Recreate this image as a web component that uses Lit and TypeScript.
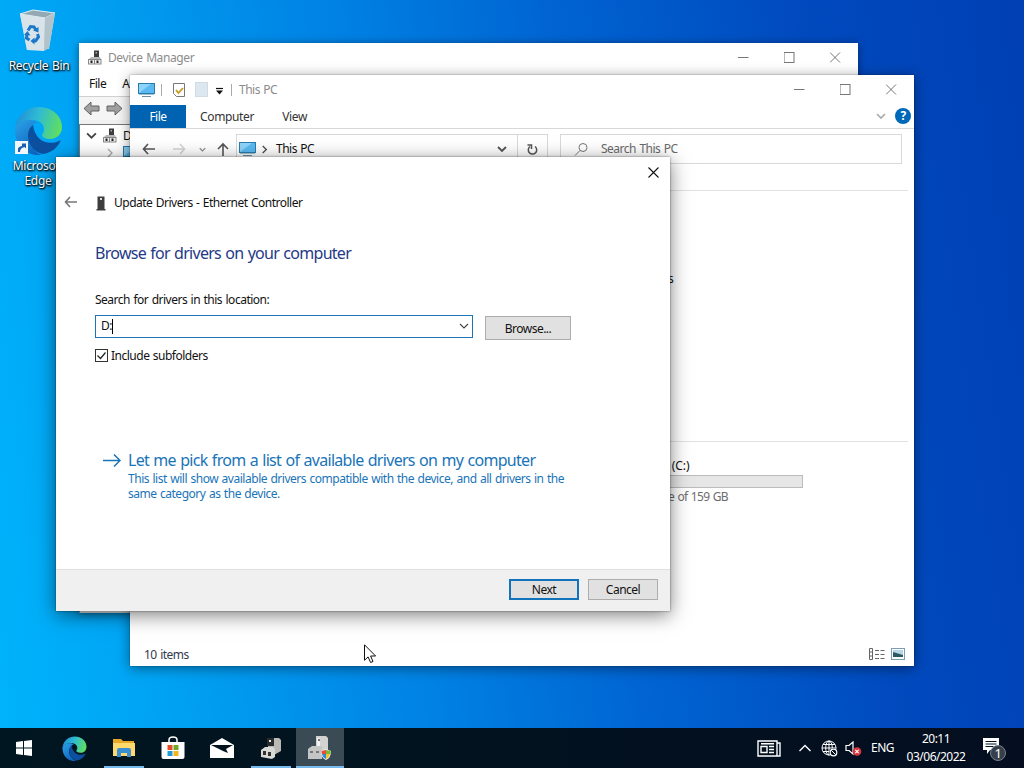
import { LitElement, html, css, svg } from "lit";
import { customElement, property } from "lit/decorators.js";

const monitorIcon = html`<svg width="18" height="16" viewBox="0 0 18 16">
  <rect x="0.500" y="1.500" width="16" height="10" fill="#5ab9f2" stroke="#2a7cab" />
  <path d="M1 11V2h12z" fill="#8ed4fa" />
  <path d="M4 14.500h9" stroke="#6d8fa5" />
  <path d="M1 12.500h15" stroke="#9fc0d2" />
</svg>`;

const deviceIcon = html`<svg width="16" height="16" viewBox="0 0 16 16">
  <rect x="7" y="0.500" width="5" height="8" fill="#3c3c3c" />
  <rect x="8.500" y="2" width="1.500" height="1.500" fill="#aaa" />
  <path d="M2 9l2-2h9l1 2v5H2z" fill="#b9b9b9" />
  <rect x="1.500" y="9.500" width="12.500" height="4.500" fill="#eee" stroke="#8a8a8a" />
  <rect x="3.500" y="10.500" width="2" height="2.500" fill="#222" />
  <rect x="9.500" y="10.500" width="2" height="2.500" fill="#222" />
  <path d="M7.500 9v5" stroke="#888" />
</svg>`;

const chevron = (color: string, size = 10, width = 1.3) => html`<svg
  width=${size}
  height=${size}
  viewBox="0 0 10 10"
>
  <path d="M1 3l4 4 4-4" fill="none" stroke=${color} stroke-width=${width} />
</svg>`;

const edgeShape = svg`
  <defs>
    <linearGradient id="edge-top" x1="0" y1="0.4" x2="1" y2="0.6">
      <stop offset="0" stop-color="#1f8fd8" />
      <stop offset="0.45" stop-color="#2fbbd4" />
      <stop offset="1" stop-color="#62e05a" />
    </linearGradient>
    <linearGradient id="edge-left" x1="0" y1="0" x2="0.6" y2="1">
      <stop offset="0" stop-color="#2ba3e8" />
      <stop offset="1" stop-color="#0f62bd" />
    </linearGradient>
  </defs>
  <path d="M1 22C3 8 14 1 25 1c13 0 23 9 23 20 0 7-5 12-12 12-5 0-8-2-8-4 0-1 2-2 2-6 0-5-5-9-11-9C10 14 3 17 1 22z" fill="url(#edge-top)" />
  <path d="M1 22c2-5 8-8 14-8 3 0 6 1 8 2-5 2-9 8-9 14 0 8 6 16 14 19-14 2-28-9-27-27z" fill="url(#edge-left)" />
  <path d="M19 19c-4 3-5 7-5 11 0 9 7 17 15 18 8-1 14-6 17-12 1-1 0-2-1-1-11 5-24 0-26-16z" fill="#0d4f9f" />`;

const edgeIcon = (size: number) =>
  html`<svg width=${size} height=${size} viewBox="0 0 49 49">${edgeShape}</svg>`;

const recycleIcon = html`<svg width="40" height="44" viewBox="0 0 40 44">
  <path d="M1 5l35-1-6 36-22 1z" fill="#c3d5df" />
  <path d="M1 5l13-4 22 3-10 5z" fill="#93a9b4" stroke="#e2eff5" />
  <path d="M1 5l25 4-1 33-17-1z" fill="#d8e4ea" />
  <path d="M26 9l10-5-6 35-5 3z" fill="#b2c3cb" />
  <g fill="none" stroke="#1a78c8" stroke-width="3">
    <path d="M9 21.500l2.500-4 3.500 0.500 2 3" />
    <path d="M18.500 25l1 3-3 4h-2" />
    <path d="M10.500 31l-3-2 0.500-4" />
  </g>
  <path d="M19.500 18v5.500l-5.500-2zM15.500 28.500v7l-4-3.500zM5 26l3.500-4 3 4.500z" fill="#1a78c8" />
</svg>`;

const toolbarArrow = html`<svg width="17" height="15" viewBox="0 0 17 15">
  <path d="M1 7.500L8 1v4h8v5H8v4z" fill="#a0a0a0" stroke="#626262" />
</svg>`;

const navArrow = (color: string) => html`<svg width="14" height="12" viewBox="0 0 14 12">
  <path d="M6 1L1.500 6 6 11M1.500 6H13" fill="none" stroke=${color} stroke-width="1.600" />
</svg>`;

@customElement("window-controls")
export class WindowControls extends LitElement {
  static styles = css`
    :host {
      display: flex;
      margin-left: auto;
    }
    svg {
      display: block;
      width: 11px;
      height: 11px;
      padding: 0 17.5px 1px;
      fill: none;
      stroke: #777;
    }
  `;

  render() {
    return html`
      <svg viewBox="0 0 11 11"><path d="M0.500 5.500h10.500" /></svg>
      <svg viewBox="0 0 11 11"><rect x="0.500" y="0.500" width="10" height="10" /></svg>
      <svg viewBox="0 0 11 11"><path d="M0.500 0.500l10 10M10.500 0.500l-10 10" /></svg>
    `;
  }
}

@customElement("desktop-icon")
export class DesktopIcon extends LitElement {
  @property() label = "";

  static styles = css`
    :host {
      display: flex;
      flex-direction: column;
      align-items: center;
      width: 76px;
    }
    .label {
      font-size: 12px;
      line-height: 15px;
      letter-spacing: -0.3px;
      color: #fff;
      text-align: center;
      text-shadow: 0 1px 2px #000, 1px 1px 2px #000;
    }
  `;

  render() {
    return html`<slot></slot><span class="label">${this.label}</span>`;
  }
}

@customElement("device-manager")
export class DeviceManager extends LitElement {
  static styles = css`
    :host {
      display: flex;
      flex-direction: column;
      background: #fff;
    }
    svg {
      display: block;
      flex: none;
    }
    .title {
      display: flex;
      align-items: center;
      height: 29px;
      padding-left: 8px;
      gap: 5px;
      color: #8c8c8c;
    }
    .title-text {
      letter-spacing: -0.45px;
    }
    .title-text {
      letter-spacing: -0.4px;
    }
    .menu {
      display: flex;
      align-items: center;
      height: 24px;
      padding-left: 10px;
      gap: 16px;
      border-bottom: 1px solid #d0d0d0;
    }
    .toolbar {
      display: flex;
      align-items: center;
      height: 23px;
      padding-left: 4px;
      gap: 6px;
      background: #f5f5f5;
      border-bottom: 4px solid #f0f0f0;
    }
    .flip {
      transform: scaleX(-1);
    }
    .tree {
      flex: 1;
      border: 1px solid #777;
      border-bottom-color: #ddd;
      padding: 2px 0 0 6px;
    }
    .row {
      display: flex;
      align-items: center;
      height: 17px;
      gap: 5px;
    }
    .child {
      padding-left: 19px;
      gap: 8px;
    }
    .closed {
      transform: rotate(-90deg);
    }
  `;

  render() {
    return html`
      <div class="title">
        ${deviceIcon}
        <span class="title-text">Device Manager</span>
        <window-controls></window-controls>
      </div>
      <div class="menu"><span>File</span><span>A</span></div>
      <div class="toolbar">
        ${toolbarArrow}
        <div class="flip">${toolbarArrow}</div>
      </div>
      <div class="tree">
        <div class="row">${chevron("#444", 11, 1.6)} ${deviceIcon} <span>D</span></div>
        <div class="row child">
          <div class="closed">${chevron("#aaa", 10)}</div>
          ${monitorIcon}
        </div>
      </div>
    `;
  }
}

@customElement("file-explorer")
export class FileExplorer extends LitElement {
  static styles = css`
    :host {
      display: flex;
      flex-direction: column;
      background: #fff;
    }
    svg {
      display: block;
      flex: none;
    }
    .title {
      display: flex;
      align-items: center;
      height: 30px;
      padding-left: 8px;
      color: #8c8c8c;
    }
    .rule {
      width: 1px;
      height: 12px;
      background: #aaa;
    }
    .check {
      margin: 0 7px 0 10px;
    }
    .title-rule {
      margin: 0 7px 0 2px;
    }
    .pc-rule {
      margin-left: 5px;
    }
    .tabs {
      display: flex;
      align-items: center;
      height: 23px;
      border-bottom: 1px solid #d8d8d8;
      color: #333;
    }
    .tab-file {
      width: 56px;
      height: 23px;
      line-height: 24px;
      margin-right: 14px;
      background: #0063b1;
      color: #fff;
      text-align: center;
    }
    .tab {
      margin-right: 28px;
      padding-top: 1px;
      letter-spacing: -0.35px;
    }
    .ribbon-end {
      display: flex;
      align-items: center;
      gap: 9px;
      margin-left: auto;
      padding: 0 3px 1px 0;
    }
    .help {
      width: 16px;
      height: 16px;
      line-height: 16px;
      border-radius: 50%;
      background: #0068b8;
      color: #fff;
      font-weight: 700;
      text-align: center;
    }
    .nav {
      display: flex;
      align-items: center;
      height: 40px;
      padding-left: 12px;
      border-bottom: 1px solid transparent;
    }
    .flip {
      transform: scaleX(-1);
      margin: 0 13px 0 16px;
    }
    .up {
      margin: 0 7px 0 11px;
    }
    .address {
      display: flex;
      align-items: center;
      box-sizing: border-box;
      width: 312px;
      height: 30px;
      padding-left: 2px;
      border: 1px solid #d9d9d9;
    }
    .crumb {
      transform: rotate(-90deg);
      margin: 0 7px 0 3px;
    }
    .address-end {
      display: flex;
      align-items: center;
      justify-content: space-between;
      box-sizing: border-box;
      width: 50px;
      height: 28px;
      margin-left: auto;
      padding-right: 8px;
    }
    .refresh {
      display: flex;
      align-items: center;
      height: 28px;
      padding-left: 8px;
      border-left: 1px solid #d9d9d9;
    }
    .search {
      display: flex;
      align-items: center;
      box-sizing: border-box;
      width: 342px;
      height: 30px;
      margin-left: 12px;
      padding-left: 13px;
      gap: 12px;
      border: 1px solid #d9d9d9;
      color: #6a6a6a;
    }
    .content {
      display: flex;
      flex-direction: column;
      flex: 1;
      margin: 20px 6px 0 0;
      border-top: 1px solid #e2e2e2;
    }
    .folders {
      height: 251px;
      box-sizing: border-box;
      padding: 80px 0 0 538px;
      border-bottom: 1px solid #e2e2e2;
    }
    .drive {
      display: flex;
      flex-direction: column;
      padding: 16px 0 0 538px;
    }
    .letter {
      letter-spacing: -0.1px;
    }
    .bar {
      box-sizing: border-box;
      width: 135px;
      height: 13px;
      margin-top: 1px;
      border: 1px solid #bcbcbc;
      background: #e6e6e6;
    }
    .free {
      color: #6d6d6d;
      margin-top: 1px;
      letter-spacing: -0.65px;
    }
    .status {
      display: flex;
      align-items: center;
      height: 22px;
      padding: 2px 9px 0 14px;
      gap: 6px;
      color: #33394d;
    }
    .view {
      margin-left: auto;
    }
    .status svg {
      margin-bottom: 2px;
    }
  `;

  render() {
    return html`
      <div class="title">
        ${monitorIcon}
        <span class="rule pc-rule"></span>
        <svg class="check" width="14" height="16" viewBox="0 0 14 16">
          <path d="M1.500 1.500h11v13h-8l-3-3z" fill="#fff" stroke="#777" />
          <path d="M4 8l2.500 3L11 6" fill="none" stroke="#c39a1c" stroke-width="1.800" />
        </svg>
        <svg width="16" height="16" viewBox="0 0 16 16">
          <rect x="2.500" y="0.500" width="12" height="14" fill="#dde7ef" stroke="#d0dbe4" />
        </svg>
        <svg width="20" height="10" viewBox="0 0 20 10">
          <path d="M7 3.500h7" stroke="#111" stroke-width="1.200" />
          <path d="M7 5.500h7l-3.500 4z" fill="#111" />
        </svg>
        <span class="rule title-rule"></span>
        <span>This PC</span>
        <window-controls></window-controls>
      </div>
      <div class="tabs">
        <span class="tab-file">File</span>
        <span class="tab">Computer</span>
        <span class="tab">View</span>
        <div class="ribbon-end">${chevron("#aaa", 10, 1.6)}<span class="help">?</span></div>
      </div>
      <div class="nav">
        ${navArrow("#555")}
        <div class="flip">${navArrow("#d3d3d3")}</div>
        ${chevron("#888", 7, 1.8)}
        <svg class="up" width="12" height="14" viewBox="0 0 12 14">
          <path d="M1 7l5-5 5 5M6 2v12" fill="none" stroke="#555" stroke-width="1.600" />
        </svg>
        <div class="address">
          ${monitorIcon}
          <div class="crumb">${chevron("#555", 9, 1.6)}</div>
          <span>This PC</span>
          <div class="address-end">
            ${chevron("#555", 10, 1.8)}
            <div class="refresh">
              <svg width="13" height="13" viewBox="0 0 13 13">
                <path d="M9 3.500A4.200 4.200 0 1 1 4 3.500M1.500 2h4v4" fill="none" stroke="#555" stroke-width="1.500" />
              </svg>
            </div>
          </div>
        </div>
        <div class="search">
          <svg width="15" height="15" viewBox="0 0 15 15">
            <g fill="none" stroke="#777">
              <circle cx="9" cy="5.500" r="4" />
              <path d="M6 8.500L1 13.500" />
            </g>
          </svg>
          <span>Search This PC</span>
        </div>
      </div>
      <div class="content">
        <div class="folders">s</div>
        <div class="drive">
          <span class="letter">&nbsp;(C:)</span>
          <div class="bar"></div>
          <span class="free">e of 159 GB</span>
        </div>
      </div>
      <div class="status">
        <span>10 items</span>
        <svg class="view" width="17" height="14" viewBox="0 0 17 14">
          <g fill="none" stroke="#666">
            <path d="M1.500 1.500h3v11h-3zM1.500 5h3M1.500 9h3" />
            <path d="M7 3.500h4M12.500 3.500h4M7 7.500h4M12.500 7.500h4M7 11.500h4M12.500 11.500h4" />
          </g>
        </svg>
        <svg width="14" height="12" viewBox="0 0 14 12">
          <rect x="0.500" y="0.500" width="13" height="11" fill="#fff" stroke="#7a9cb5" />
          <rect x="2" y="2" width="10" height="7" fill="#b6d7ea" />
          <path d="M2 4l10 3v2H2z" fill="#2d5961" />
        </svg>
      </div>
    `;
  }
}

@customElement("driver-dialog")
export class DriverDialog extends LitElement {
  static styles = css`
    :host {
      display: flex;
      flex-direction: column;
      background: #fff;
    }
    svg {
      display: block;
      flex: none;
    }
    .close {
      align-self: flex-end;
      padding: 10px 11px 0 0;
    }
    .header {
      display: flex;
      align-items: center;
      height: 18px;
      margin-top: 16px;
      padding-left: 8px;
    }
    .back {
      padding-bottom: 2px;
    }
    .header-icon {
      margin: 0 8px 0 18px;
    }
    .body {
      display: flex;
      flex-direction: column;
      flex: 1;
      padding: 30px 39px 0;
    }
    .heading {
      font-size: 16px;
      line-height: 22px;
      letter-spacing: -0.72px;
      color: #1f3a87;
    }
    .field-label {
      margin-top: 28px;
    }
    .field {
      display: flex;
      align-items: flex-start;
      gap: 12px;
      margin-top: 6px;
    }
    .combo {
      display: flex;
      align-items: center;
      box-sizing: border-box;
      width: 378px;
      height: 23px;
      margin-top: 1px;
      padding: 0 3px 1px 5px;
      border: 1px solid #1c74b4;
    }
    .caret {
      width: 1px;
      height: 15px;
      background: #000;
    }
    .combo-arrow {
      margin-left: auto;
    }
    .button {
      box-sizing: border-box;
      width: 70px;
      height: 21px;
      line-height: 20px;
      border: 1px solid #adadad;
      background: #e1e1e1;
      text-align: center;
    }
    .browse {
      width: 86px;
      height: 24px;
      line-height: 23px;
      margin-top: 2px;
    }
    .primary {
      border: 2px solid #1273bd;
      line-height: 18px;
    }
    .include {
      display: flex;
      align-items: center;
      gap: 3px;
      margin-top: 8px;
    }
    .include svg {
      margin-bottom: 2px;
    }
    .pick {
      display: flex;
      margin: 86px 0 0 8px;
      gap: 7px;
      color: #1a74b8;
    }
    .pick-arrow {
      margin-top: 4px;
    }
    .pick-title {
      font-size: 16px;
      line-height: 21px;
      letter-spacing: -0.7px;
    }
    .pick-text {
      line-height: 15px;
      letter-spacing: -0.48px;
    }
    .footer {
      display: flex;
      justify-content: flex-end;
      gap: 9px;
      height: 32px;
      padding: 9px 12px 0 0;
      background: #f0f0f0;
      border-top: 1px solid #dfdfdf;
    }
  `;

  render() {
    return html`
      <div class="close">
        <svg width="11" height="11" viewBox="0 0 11 11">
          <path d="M0.500 0.500l10 10M10.500 0.500l-10 10" stroke="#111" stroke-width="1.100" />
        </svg>
      </div>
      <div class="header">
        <div class="back">${navArrow("#777")}</div>
        <svg class="header-icon" width="10" height="15" viewBox="0 0 10 15">
          <path d="M1.500 0.500h7V13h1v1.500h-9V13h1z" fill="#3d3d3d" />
          <rect x="4" y="2" width="2" height="2" fill="#ddd" />
        </svg>
        <span>Update Drivers - Ethernet Controller</span>
      </div>
      <div class="body">
        <span class="heading">Browse for drivers on your computer</span>
        <span class="field-label">Search for drivers in this location:</span>
        <div class="field">
          <div class="combo">
            <span>D:</span><span class="caret"></span>
            <div class="combo-arrow">${chevron("#444", 10, 1.1)}</div>
          </div>
          <div class="button browse">Browse...</div>
        </div>
        <div class="include">
          <svg width="13" height="13" viewBox="0 0 13 13">
            <rect x="0.500" y="0.500" width="12" height="12" fill="#fff" stroke="#333" />
            <path d="M2.500 6.500l3 3 5-6" fill="none" stroke="#222" stroke-width="1.200" />
          </svg>
          <span>Include subfolders</span>
        </div>
        <div class="pick">
          <svg class="pick-arrow" width="18" height="13" viewBox="0 0 18 13">
            <path d="M0 6.500h17M11 0.500l6 6-6 6" fill="none" stroke="#1a74b8" stroke-width="1.500" />
          </svg>
          <div>
            <div class="pick-title">Let me pick from a list of available drivers on my computer</div>
            <div class="pick-text">
              This list will show available drivers compatible with the device, and all drivers in the<br />same
              category as the device.
            </div>
          </div>
        </div>
      </div>
      <div class="footer">
        <div class="button primary">Next</div>
        <div class="button">Cancel</div>
      </div>
    `;
  }
}

@customElement("task-bar")
export class TaskBar extends LitElement {
  static styles = css`
    :host {
      display: flex;
      align-items: center;
      background: linear-gradient(90deg, #001620, #02121f 50%, #040e20);
      color: #fff;
    }
    svg {
      display: block;
      flex: none;
    }
    .apps {
      display: flex;
      height: 40px;
    }
    .app {
      display: flex;
      align-items: center;
      justify-content: center;
      box-sizing: border-box;
      width: 49px;
      border-bottom: 2px solid transparent;
      padding-top: 2px;
    }
    .start {
      width: 48px;
      margin-right: 2px;
      padding-top: 1px;
    }
    .open {
      width: 40px;
      margin: 0 5px 0 4px;
      border-color: #76b9ed;
    }
    .explorer-app {
      margin-left: 5px;
    }
    .store,
    .mail {
      padding-right: 2px;
    }
    .active {
      width: 48px;
      background: #3a4b56;
      border-color: #76b9ed;
    }
    .tray {
      display: flex;
      align-items: center;
      margin-left: auto;
      padding-right: 17px;
    }
    .chev {
      margin: 0 10px 0 18px;
    }
    .volume {
      margin: 0 9px 0 7px;
    }
    .lang {
      letter-spacing: -0.5px;
    }
    .clock {
      width: 60px;
      margin: 0 15px 1px 12px;
      line-height: 18px;
      text-align: center;
      letter-spacing: -0.5px;
    }
  `;

  render() {
    return html`
      <div class="apps">
        <div class="app start">
          <svg width="16" height="16" viewBox="0 0 16 16" fill="#fff">
            <path d="M0 2l7-1v6.500H0zM8 .9L16 0v7.500H8zM0 8.500h7V15l-7-1zM8 8.500h8V16l-8-1z" />
          </svg>
        </div>
        <div class="app">${edgeIcon(25)}</div>
        <div class="app open explorer-app">
          <svg width="22" height="20" viewBox="0 0 22 20">
            <path d="M0 1h8l2 2h11v15H0z" fill="#e9a928" />
            <path d="M0 5h22v13H0z" fill="#ffd96b" />
            <path d="M4 19v-7q0-2 2-2h10q2 0 2 2v7h-4v-4H8v4z" fill="#3c8ed2" />
          </svg>
        </div>
        <div class="app store">
          <svg width="24" height="24" viewBox="0 0 24 24">
            <path d="M8 7V4q0-3 4-3t4 3v3" fill="none" stroke="#fff" stroke-width="1.500" />
            <path d="M0.500 6h23v15q0 2-2 2h-19q-2 0-2-2z" fill="#fff" />
            <path d="M6.500 9h5v5h-5z" fill="#e74c27" />
            <path d="M12.500 9h5v5h-5z" fill="#71a829" />
            <path d="M6.500 15h5v5h-5z" fill="#219ad8" />
            <path d="M12.500 15h5v5h-5z" fill="#f2b51c" />
          </svg>
        </div>
        <div class="app mail">
          <svg width="24" height="20" viewBox="0 0 24 20">
            <path d="M0 7l12-7 12 7v13H0z" fill="#fff" />
            <path d="M1 7h22l-7 4 2 4-5-2z" fill="#02121f" />
          </svg>
        </div>
        <div class="app open">
          <svg width="24" height="24" viewBox="0 0 24 24">
            <path d="M9 2h11l2 2v11l-7 4H9z" fill="#b9b9b5" />
            <path d="M8 2h7v8H8z" fill="#292b2a" />
            <path d="M2 14l4-3h8l2 2v8l-3 2-11-2z" fill="#d9d9d6" />
            <path d="M4 15h3v4H4zM9 16h3v4H9z" fill="#333" />
            <path d="M10 4h2v2h-2z" fill="#eee" />
          </svg>
        </div>
        <div class="app active">
          <svg width="26" height="26" viewBox="0 0 26 26">
            <path d="M9 1h10l2 2v15H9z" fill="#d2d3d1" />
            <path d="M1 14l4-3h10v13H1z" fill="#c4c6c5" />
            <path d="M10 3h3v8h-3z" fill="#f2f2f2" />
            <path d="M3 17h3M9 17h3M11 5h2" stroke="#777" stroke-width="2" />
            <path d="M19 14l5 2q0 7-5 9-5-2-5-9z" fill="#eee" />
            <path d="M19 15v4h-4q-.5-1-.5-3z" fill="#e64c3c" />
            <path d="M19 15l4.500 1v3H19z" fill="#7bb92f" />
            <path d="M15 19h4v5q-3-1-4-5z" fill="#2d8bd6" />
            <path d="M19 19h4q-1 4-4 5z" fill="#f4c430" />
          </svg>
        </div>
      </div>
      <div class="tray">
        <svg width="24" height="17" viewBox="0 0 24 17">
          <g fill="none" stroke="#fff" stroke-width="1.400">
            <path d="M1 1h19v15H1zM20 3h3v13h-4" />
            <path d="M4 6.500h6v6H4zM4 3.700h13M12 6.500h5M12 9.500h5M12 12.500h5" />
          </g>
        </svg>
        <svg class="chev" width="12" height="8" viewBox="0 0 12 8">
          <path d="M0.500 7L6 1.500 11.500 7" fill="none" stroke="#fff" stroke-width="1.400" />
        </svg>
        <svg width="17" height="17" viewBox="0 0 17 17">
          <g fill="none" stroke="#fff">
            <circle cx="8" cy="8" r="7" />
            <ellipse cx="8" cy="8" rx="3.300" ry="7" />
            <path d="M1 8h14M2 4.500h12M2 11.500h12M8 1v14" />
          </g>
          <circle cx="12.500" cy="12.500" r="4.300" fill="#04111f" />
          <circle cx="12.500" cy="12.500" r="3.300" fill="none" stroke="#fff" stroke-width="1.200" />
          <path d="M10.300 10.300l4.400 4.400" stroke="#fff" />
        </svg>
        <svg class="volume" width="17" height="15" viewBox="0 0 17 15">
          <path d="M1 4.500h3l4-3.500v12L4 9.500H1z" fill="none" stroke="#fff" stroke-width="1.200" />
          <circle cx="12" cy="10.500" r="4.300" fill="#d9363e" />
          <path d="M10.300 8.800l3.400 3.400M13.700 8.800l-3.400 3.400" stroke="#fff" stroke-width="1.200" />
        </svg>
        <span class="lang">ENG</span>
        <div class="clock">20:11<br />03/06/2022</div>
        <svg width="26" height="26" viewBox="0 0 26 26">
          <path d="M2 3h16v12h-9l-3 4v-4H2z" fill="#fff" />
          <path d="M4.500 6.500h11M4.500 9h11M4.500 11.500h8" stroke="#04111f" />
          <circle cx="17" cy="18" r="7.500" fill="#35404b" stroke="#79818a" />
          <text x="13.500" y="22.500" fill="#fff" font-size="13">1</text>
        </svg>
      </div>
    `;
  }
}

@customElement("app-root")
export class AppRoot extends LitElement {
  static styles = css`
    :host {
      display: block;
      position: relative;
      width: 1024px;
      height: 768px;
      overflow: hidden;
      font: 12px/16px "Noto Sans", "Open Sans", sans-serif;
      letter-spacing: -0.5px;
      word-spacing: 0.8px;
      color: #111;
      background: linear-gradient(
        82deg,
        #00b4fb 0%,
        #00a4f4 14%,
        #0083e4 38%,
        #0064d2 58%,
        #004abe 80%,
        #003fb4 100%
      );
    }
    .recycle,
    .edge,
    .devices,
    .explorer,
    .dialog,
    .shortcut,
    .cursor {
      position: absolute;
    }
    .recycle {
      left: 1px;
      top: 9px;
    }
    .recycle svg {
      margin-bottom: 5px;
    }
    .edge {
      left: 0;
      top: 106px;
    }
    .edge svg {
      display: block;
      margin-bottom: 3px;
    }
    .shortcut {
      left: 15px;
      top: 141px;
    }
    .devices {
      left: 79px;
      top: 43px;
      width: 779px;
      height: 570px;
      box-shadow: 0 1px 8px rgba(0, 0, 0, 0.45);
    }
    .explorer {
      left: 130px;
      top: 75px;
      width: 784px;
      height: 591px;
      box-shadow: 0 2px 12px rgba(0, 0, 0, 0.45), 0 0 1px rgba(0, 0, 0, 0.6);
    }
    .dialog {
      left: 56px;
      top: 157px;
      width: 614px;
      height: 454px;
      box-shadow: 0 4px 18px rgba(0, 0, 0, 0.5), 0 0 2px rgba(0, 0, 0, 0.5);
    }
    .cursor {
      left: 364px;
      top: 644px;
    }
    .screen {
      display: flex;
      flex-direction: column;
      justify-content: flex-end;
      height: 768px;
    }
    .taskbar {
      height: 40px;
    }
  `;

  render() {
    return html`
      <desktop-icon class="recycle" label="Recycle Bin">${recycleIcon}</desktop-icon>
      <desktop-icon class="edge" label="Microsoft Edge">${edgeIcon(49)}</desktop-icon>
      <svg class="shortcut" width="13" height="13" viewBox="0 0 13 13">
        <rect width="13" height="13" fill="#f3f7fb" />
        <path d="M3 11V8q0-2 4-3V2.500h4v5L9.500 6Q5 7 5 11z" fill="#1b5fae" />
      </svg>
      <device-manager class="devices"></device-manager>
      <file-explorer class="explorer"></file-explorer>
      <driver-dialog class="dialog"></driver-dialog>
      <svg class="cursor" width="13" height="20" viewBox="0 0 13 20">
        <path
          d="M0.500 0.800v15.500l3.600-3.400 2.500 5.600 2.400-1-2.400-5.500h5z"
          fill="#fff"
          stroke="#111"
        />
      </svg>
      <div class="screen"><task-bar class="taskbar"></task-bar></div>
    `;
  }
}
